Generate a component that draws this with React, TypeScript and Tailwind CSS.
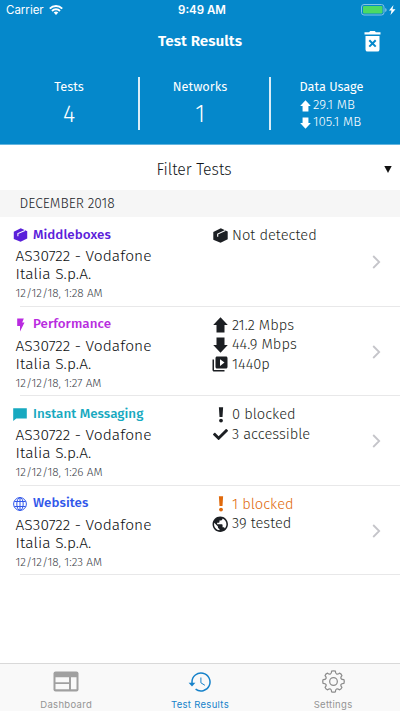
import type { ReactNode } from "react";
import { FaCheck } from "react-icons/fa";
import { MdPublic, MdVideoLibrary } from "react-icons/md";

function Arrow({ down = false, className }: { down?: boolean; className: string }) {
  return (
    <svg viewBox="0 0 15 16" className={className} fill="currentColor">
      <path d={down ? "M3.5 0.5h8v7.5h3.3L7.5 15.8 0.2 8h3.3z" : "M7.5 0.2 14.8 8h-3.3v7.5h-8V8H0.2z"} />
    </svg>
  );
}

function Box({ className }: { className: string }) {
  return (
    <svg viewBox="0 0 15 15" className={className} fill="currentColor">
      <path d="M7.8.3 14.7 3.5v7.8L7.6 14.7.3 11.8V4z" />
      <path d="M12.3 2.6 4.7 6v2.8" fill="none" stroke="white" strokeWidth="1.1" />
    </svg>
  );
}

function Bolt() {
  return (
    <svg viewBox="0 0 9 14" className="ml-[3px] h-[14px] w-[9px]" fill="currentColor">
      <path d="M1.2.5h6.6L6.2 4.6h2.3L4 13.6V8H1.2z" />
    </svg>
  );
}

function Chat() {
  return (
    <svg viewBox="0 0 14 13" className="h-[13px] w-[14px]" fill="currentColor">
      <path d="M.2.2h13.6v10.4H3.3L.2 13z" />
    </svg>
  );
}

function Globe() {
  return (
    <svg viewBox="0 0 14 14" className="h-[14px] w-[14px]" fill="none" stroke="currentColor" strokeWidth="1">
      <circle cx="7" cy="7" r="6.4" />
      <ellipse cx="7" cy="7" rx="3.2" ry="6.4" />
      <path d="M7 .6v12.8M1.3 4.5h11.4M1.3 9.5h11.4" />
    </svg>
  );
}

function Bang() {
  return (
    <svg viewBox="0 0 6 16" className="ml-[5px] h-4 w-[6px] shrink-0" fill="currentColor">
      <path d="M.9.3h4.2L4.5 10h-3z" />
      <circle cx="3" cy="13.6" r="1.9" />
    </svg>
  );
}

function Trash() {
  return (
    <svg viewBox="0 0 17 21" className="h-[21px] w-[17px]">
      <path fill="white" d="M.5 1.2h4.6L6.2 0h4.6l1.1 1.2h4.6v2.3H.5zM1.5 5h14v13.4a2.2 2.2 0 0 1-2.2 2.2H3.7a2.2 2.2 0 0 1-2.2-2.2z" />
      <path stroke="#0588cb" strokeWidth="2" d="m5.3 9.2 6.4 6.4m0-6.4-6.4 6.4" />
    </svg>
  );
}

function Metric({ icon, children, className = "text-[#1c1f23]" }: { icon: ReactNode; children: ReactNode; className?: string }) {
  return (
    <div className={"flex h-[19.5px] items-center " + className}>
      <span className="flex w-[19px] shrink-0 items-center">{icon}</span>
      <span className="whitespace-nowrap text-[14.7px] font-light leading-[19.5px]">{children}</span>
    </div>
  );
}

function Row({ icon, name, color, time, children }: { icon: ReactNode; name: ReactNode; color: string; time: string; children: ReactNode }) {
  return (
    <div className="relative flex h-[89.5px] after:absolute after:bottom-0 after:left-5 after:right-0 after:h-px after:bg-[#e8e8e9]">
      <div className="w-[213px] pl-[13px] pt-2">
        <div className={"flex h-5 items-center " + color}>
          <span className="flex w-5 shrink-0">{icon}</span>
          <span className="whitespace-nowrap text-[13.4px] font-medium tracking-[0.03px]">{name}</span>
        </div>
        <div className="ml-[2.5px] mt-[2px] text-[15.5px] font-light leading-[18px] tracking-[0.1px] text-[#0c0e10]">
          <div>AS30722 - Vodafone</div>
          <div>Italia S.p.A.</div>
        </div>
        <div className="ml-[2.5px] mt-[2px] text-[11.8px] font-light leading-4 text-[#3c434a]">{time}</div>
      </div>
      <div className="flex-1 pt-[9px]">{children}</div>
      <svg viewBox="0 0 9 14" className="mr-[19px] mt-[1px] h-[14px] w-[9px] self-center" fill="none" stroke="#c5c5ca" strokeWidth="1.8">
        <path d="m1.2 1 6 6-6 6" />
      </svg>
    </div>
  );
}

export default function App() {
  return (
    <div className="flex h-[711px] w-[400px] flex-col overflow-hidden bg-white font-['Fira_Sans','Noto_Sans',sans-serif]">
      <header className="h-[145px] shrink-0 border-b border-[#64b5df] bg-[#0588cb] text-white">
        <div className="grid h-5 grid-cols-3 items-center pt-px font-['Inter',sans-serif] text-[11.5px]">
          <div className="flex items-center gap-[5px] pl-[6px]">
            <span>Carrier</span>
            <svg viewBox="0 0 14 10" className="-mt-px h-[10px] w-[14px]" fill="none" stroke="white" strokeWidth="2">
              <path d="M.8 3.6a8.8 8.8 0 0 1 12.4 0M3 6a5.7 5.7 0 0 1 8 0" />
              <path fill="white" stroke="none" d="m7 10-2.3-2.4a3.2 3.2 0 0 1 4.6 0z" />
            </svg>
          </div>
          <div className="whitespace-nowrap pl-[4px] text-center font-semibold">9:49 AM</div>
          <div className="flex items-center justify-end pr-[4px]">
            <svg viewBox="0 0 35 12" className="-mt-px h-3 w-[35px]">
              <rect x=".5" y=".5" width="22.5" height="10.5" rx="2.5" fill="none" stroke="#82c3e5" />
              <rect x="2" y="2" width="19.5" height="7.5" rx="1" fill="#4cd964" />
              <path d="M24.2 4v4q1.5-.6 1.5-2t-1.5-2" fill="#82c3e5" />
              <path d="m32.5 1-4.5 5.5h2.5L29.5 11l5-5.8h-3z" fill="white" />
            </svg>
          </div>
        </div>
        <div className="grid h-[43px] grid-cols-[1fr_auto_1fr] items-center">
          <span />
          <h1 className="text-[15.3px] font-semibold">Test Results</h1>
          <div className="flex justify-end pr-[19.5px]"><Trash /></div>
        </div>
        <div className="flex h-[67px] pt-[14px]">
          <div className="flex h-[53px] w-[140px] flex-col items-center border-r-2 border-white/85 text-[12.8px]">
            <span className="leading-5">Tests</span>
            <span className="text-[23.5px] font-light leading-[34px]">4</span>
          </div>
          <div className="flex h-[53px] w-[131px] flex-col items-center border-r-2 border-white/85 pr-[9px] text-[12.8px]">
            <span className="leading-5">Networks</span>
            <span className="text-[23.5px] font-light leading-[34px]">1</span>
          </div>
          <div className="flex-1 pl-[28.5px] text-[12.7px]">
            <div className="leading-5">Data Usage</div>
            <div className="mt-px flex h-[16px] items-center gap-[2.5px] text-[13.3px] font-light"><Arrow className="h-3 w-[11px]" />29.1 MB</div>
            <div className="flex h-[17px] items-center gap-[2.5px] text-[13.3px] font-light"><Arrow down className="h-3 w-[11px]" />105.1 MB</div>
          </div>
        </div>
      </header>
      <button className="relative flex h-[45px] shrink-0 items-center justify-center pr-3 pt-[4px] text-[15.8px] font-light text-[#111417]">
        Filter Tests
        <svg viewBox="0 0 8 7" className="absolute right-2 top-[21px] h-[7px] w-2"><path d="M.3 0h7.4L4 7z" fill="#111" /></svg>
      </button>
      <div className="h-[27px] shrink-0 bg-[#f6f6f6] pl-[19.5px] text-[13.8px] font-light leading-[28px] text-[#222529]">DECEMBER 2018</div>
      <main className="flex-1">
        <Row icon={<Box className="h-[14px] w-[15px]" />} name="Middleboxes" color="text-[#5a20da]" time="12/12/18, 1:28 AM">
          <Metric icon={<Box className="h-[15px] w-[15px]" />}>Not detected</Metric>
        </Row>
        <Row icon={<Bolt />} name="Performance" color="text-[#b92be0]" time="12/12/18, 1:27 AM">
          <Metric icon={<Arrow className="h-4 w-[15px]" />}>21.2 Mbps</Metric>
          <Metric icon={<Arrow down className="h-4 w-[15px]" />}>44.9 Mbps</Metric>
          <Metric icon={<MdVideoLibrary className="-ml-[2px] h-[18px] w-[18px] shrink-0" />}>1440p</Metric>
        </Row>
        <Row icon={<Chat />} name="Instant Messaging" color="text-[#17a9c0]" time="12/12/18, 1:26 AM">
          <Metric icon={<Bang />}>0 blocked</Metric>
          <Metric icon={<FaCheck className="h-[15px] w-[15px]" />}>3 accessible</Metric>
        </Row>
        <Row icon={<Globe />} name="Websites" color="text-[#3157ea]" time="12/12/18, 1:23 AM">
          <Metric className="text-[#e0690b]" icon={<Bang />}>1 blocked</Metric>
          <Metric icon={<MdPublic className="-ml-[2px] h-[18.5px] w-[18.5px] shrink-0" />}>39 tested</Metric>
        </Row>
      </main>
      <nav className="grid h-[48px] shrink-0 grid-cols-3 border-t border-[#d9d9d9] bg-[#f9f9f9] font-['Inter',sans-serif] text-[9.5px] tracking-[0.3px] text-[#949494]">
        <div className="flex flex-col items-center pr-[1px] pt-[7px]">
          <svg viewBox="0 0 26 21" className="h-[21px] w-[26px]">
            <rect x=".5" y=".5" width="25" height="20" rx="2" fill="#a0a0a0" />
            <path fill="#f9f9f9" d="M2.5 6.3H16v5H2.5zM2.5 13H16v5.3H2.5zM18 6.3h5.5v12H18z" />
          </svg>
          <span className="mt-[7px] leading-3">Dashboard</span>
        </div>
        <div className="flex flex-col items-center pt-[8px] text-[#1682ca]">
          <svg viewBox="0 0 24 21" className="h-[21px] w-6" fill="none" stroke="currentColor" strokeWidth="1.5">
            <path d="M4 12V10a9 9 0 1 1 3.6 7.2" />
            <path d="M.6 10.7h6.8L4 14.5z" fill="currentColor" stroke="none" />
            <path d="M12.9 5.5v5.3l4 2.5" strokeWidth="1" />
          </svg>
          <span className="mt-[6px] leading-3">Test Results</span>
        </div>
        <div className="flex flex-col items-center pr-[0.5px] pt-[6px]">
          <svg viewBox="0 0 24 24" className="h-[23px] w-[23px]" fill="none" stroke="#8c8c8c" strokeWidth="1.3">
            <path d="M10 1.2Q12 .4 14 1.2C14 4.5 15.8 5.2 18.2 3.3Q20.2 4 20.8 5.9C18.8 8.2 19.5 10 22.8 10Q23.6 12 22.8 14C19.5 14 18.8 15.8 20.8 18.1Q20.2 20 18.2 20.7C15.8 18.8 14 19.5 14 22.8Q12 23.6 10 22.8C10 19.5 8.2 18.8 5.8 20.7Q3.8 20 3.2 18.1C5.2 15.8 4.5 14 1.2 14Q.4 12 1.2 10C4.5 10 5.2 8.2 3.2 5.9Q3.8 4 5.8 3.3C8.2 5.2 10 4.5 10 1.2z" strokeLinejoin="round" />
            <circle cx="12" cy="12" r="4" />
          </svg>
          <span className="mt-[6px] leading-3">Settings</span>
        </div>
      </nav>
    </div>
  );
}
